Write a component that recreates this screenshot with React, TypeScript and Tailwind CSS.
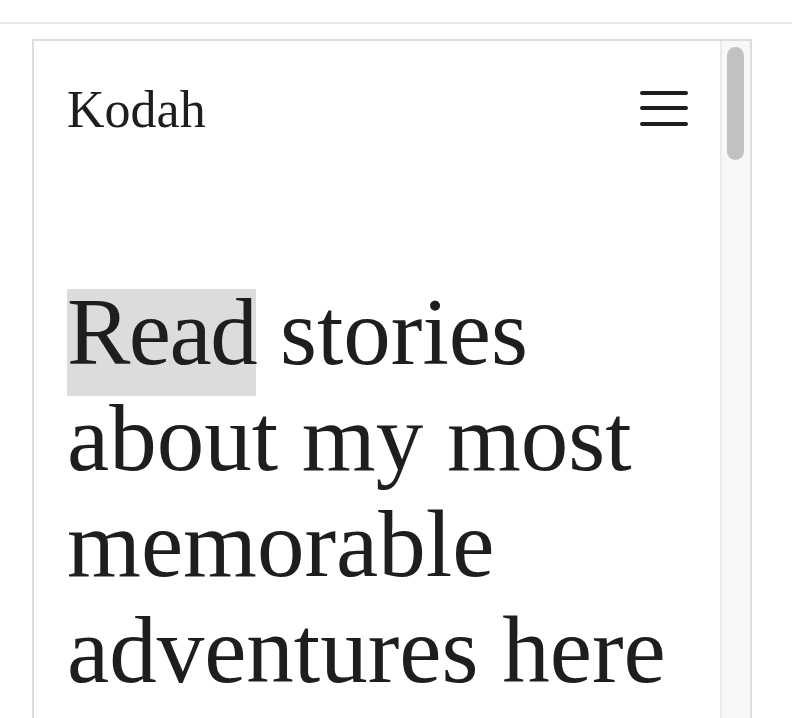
import React from "react";

export default function App() {
  return (
    <div className="min-h-screen bg-white overflow-hidden" style={{ fontFamily: '"Liberation Serif", serif' }}>
      <div className="h-[24px] border-b-2 border-[#e4e7eb]" />
      <div className="ml-[32px] mt-[15px] w-[720px] h-[700px] border-2 border-[#dddddd] flex">
        <div className="flex-1 pl-[33px] pr-[32px] pt-[43px] text-[#1e1e1e]">
          <div className="flex items-center justify-between h-[52px]">
            <div className="text-[52px] leading-[52px]">Kodah</div>
            <div className="flex flex-col gap-[11.5px] mb-[4px]">
              <div className="h-[4px] w-[48px] rounded-full bg-[#1e1e1e]" />
              <div className="h-[4px] w-[48px] rounded-full bg-[#1e1e1e]" />
              <div className="h-[4px] w-[48px] rounded-full bg-[#1e1e1e]" />
            </div>
          </div>
          <h1 className="mt-[143px] text-[95px] leading-[106px] font-normal">
            <span className="bg-[linear-gradient(to_bottom,transparent_10px,#dcdcdc_10px)] shadow-[0_11px_0_#dcdcdc] tracking-[-1.5px]">Read</span> stories about my most memorable adventures here
          </h1>
        </div>
        <div className="w-[30px] border-l-2 border-[#ebebeb] bg-[#f8f8f8] px-[5px] pt-[6px]">
          <div className="h-[113px] w-[17px] rounded-full bg-[#c1c1c1]" />
        </div>
      </div>
    </div>
  );
}
